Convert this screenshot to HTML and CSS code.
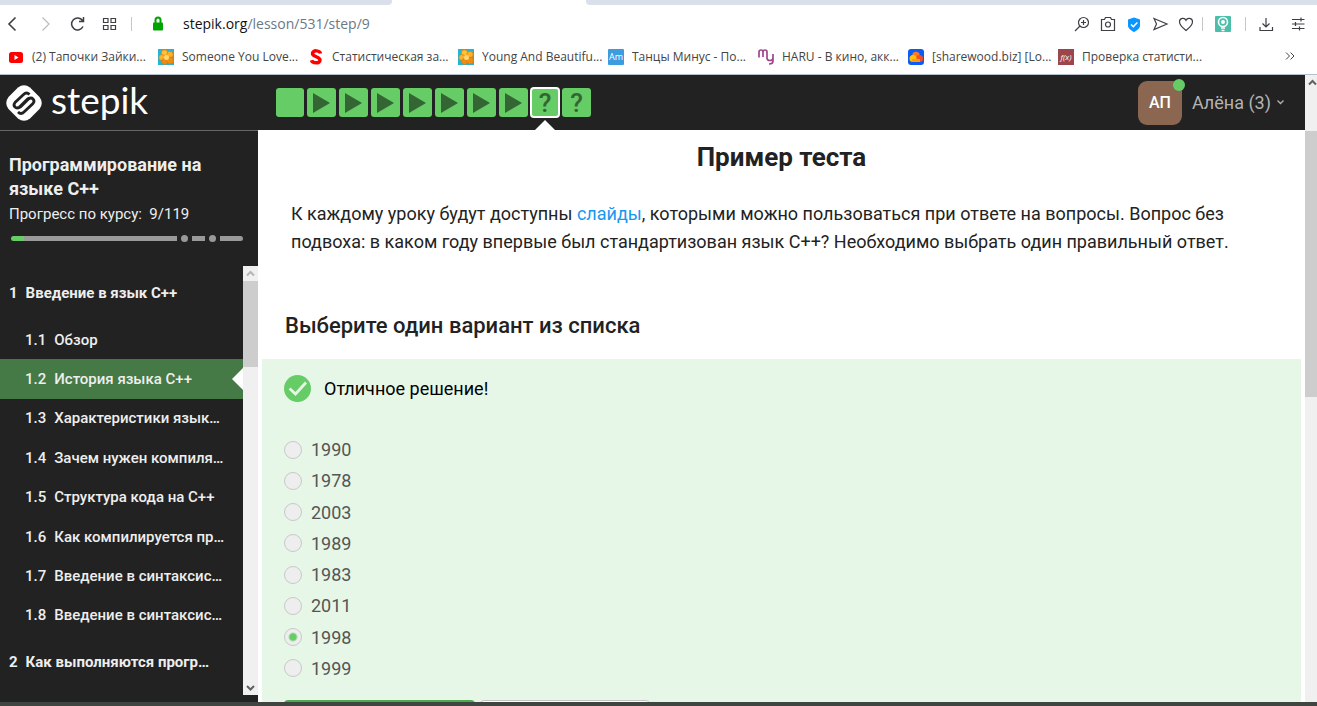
FILE: index.html
```html
<!DOCTYPE html>
<html lang="ru">
<head>
<meta charset="utf-8">
<title>Пример теста</title>
<link rel="stylesheet" href="styles.css">
</head>
<body>
<div class="tabstrip"><div class="tab-left"></div><div class="tab-right"></div></div>
<div class="toolbar">
  <button class="tool back" aria-label="Назад"><svg width="20" height="20" viewBox="0 0 20 20"><path d="M12.5 3.5 6 10l6.5 6.5"/></svg></button>
  <button class="tool forward" aria-label="Вперёд"><svg width="20" height="20" viewBox="0 0 20 20"><path d="M7.500 3.500 14 10l-6.500 6.500"/></svg></button>
  <button class="tool reload" aria-label="Обновить"><svg width="20" height="20" viewBox="0 0 20 20"><path d="M16 12.500A6 6 0 1 1 15.500 6.500M16.500 3v4.500H12"/></svg></button>
  <button class="tool grid" aria-label="Экспресс-панель"><svg width="20" height="20" viewBox="0 0 20 20"><path d="M4.500 4.500h4.500v4H4.500zM12 4.500h4.500v4H12zM4.500 11.500h4.500v4H4.500zM12 11.500h4.500v4H12z"/></svg></button>
  <span class="divider"></span>
  <svg class="lock" width="20" height="20" viewBox="0 0 20 20"><rect x="5" y="8.500" width="10" height="8" rx="1" fill="#00a400"/><path d="M7.500 9V6a2.500 2.500 0 0 1 5 0V9" fill="none" stroke="#00a400" stroke-width="2"/></svg>
  <div class="address"><span class="host">stepik.org</span>/lesson/531/step/9</div>
  <div class="tools-right">
    <button class="tool" aria-label="Масштаб"><svg width="20" height="20" viewBox="0 0 20 20"><circle cx="11.500" cy="8.500" r="5"/><path d="m8 12-5 5M11.500 6v5M9 8.500h5"/></svg></button>
    <button class="tool" aria-label="Снимок"><svg width="20" height="20" viewBox="0 0 20 20"><path d="M3.500 5.500h3l1-2h5l1 2h3v11h-13z"/><circle cx="10" cy="10.500" r="2.500"/></svg></button>
    <button class="tool" aria-label="Защита"><svg width="20" height="20" viewBox="0 0 20 20"><path class="shield" d="M10 3.500 16 5.500v6c0 3-3 5-6 6.500C7 16.500 4 14.500 4 11.500v-6z"/><path class="white" d="m7 10.500 2.300 2.200 4-4.200"/></svg></button>
    <button class="tool" aria-label="Отправить"><svg width="20" height="20" viewBox="0 0 20 20"><path d="M4 4.500 17 10 4 15.500 6.500 10z"/></svg></button>
    <button class="tool" aria-label="Закладка"><svg width="20" height="20" viewBox="0 0 20 20"><path d="M10 16.500C7 14 3.500 11.500 3.500 7.800 3.500 4 8.500 3 10 6.300 11.500 3 16.500 4 16.500 7.800c0 3.700-3.500 6.200-6.500 8.700z"/></svg></button>
    <span class="divider"></span>
    <button class="tool" aria-label="Расширение"><svg width="20" height="20" viewBox="0 0 20 20"><rect class="mint" x="2" y="2" width="16" height="16" rx="1"/><circle class="bulb" cx="10" cy="8" r="4.500"/><circle class="whitefill" cx="10" cy="8" r="2"/><path class="white" d="M8 14h4M8.500 16.500h3"/></svg></button>
    <span class="divider"></span>
    <button class="tool" aria-label="Загрузки"><svg width="20" height="20" viewBox="0 0 20 20"><path d="M10 4v8.500M6.500 9.500 10 13l3.500-3.500M4 13v3.500h12.500V13"/></svg></button>
    <button class="tool settings" aria-label="Настройки"><svg width="20" height="20" viewBox="0 0 20 20"><path d="M4 5.500h12.500M4 10h12.500M4 14.500h12.500M13 3.500v4M7.500 8v4M11.500 12.500v4"/></svg></button>
  </div>
</div>
<nav class="bookmarks">
  <a class="bookmark" href="#"><svg width="16" height="16" viewBox="0 0 16 16"><rect x="1" y="3" width="14" height="11" rx="2.500" fill="#f00"/><path d="m6.500 6 4 2.500-4 2.500z" fill="#fff"/></svg>(2) Тапочки Зайки...</a>
  <a class="bookmark" href="#"><svg width="16" height="16" viewBox="0 0 16 16"><rect width="16" height="16" fill="#22b5d5"/><g stroke="#d9780c" stroke-width=".6"><circle cx="6.500" cy="4" r="3.200" fill="#ffc233"/><circle cx="12" cy="5.500" r="3.200" fill="#fbb12a"/><circle cx="3.800" cy="8.500" r="3" fill="#fbb12a"/><circle cx="6.500" cy="12.500" r="3" fill="#f08c10"/><circle cx="12" cy="11.500" r="3.500" fill="#f08c10"/></g><circle cx="8.500" cy="8.500" r="2.500" fill="#ffd772"/></svg>Someone You Love...</a>
  <a class="bookmark" href="#"><svg width="16" height="16" viewBox="0 0 16 16"><path d="M12.500 4.500C12 1.500 4.500.500 4.500 4.500c0 3.500 7.500 3 7.500 6.500 0 4-7.500 3.500-8.500.200" fill="none" stroke="#f00" stroke-width="3.500"/></svg>Статистическая за...</a>
  <a class="bookmark" href="#"><svg width="16" height="16" viewBox="0 0 16 16"><rect width="16" height="16" fill="#22b5d5"/><g stroke="#d9780c" stroke-width=".6"><circle cx="6.500" cy="4" r="3.200" fill="#ffc233"/><circle cx="12" cy="5.500" r="3.200" fill="#fbb12a"/><circle cx="3.800" cy="8.500" r="3" fill="#fbb12a"/><circle cx="6.500" cy="12.500" r="3" fill="#f08c10"/><circle cx="12" cy="11.500" r="3.500" fill="#f08c10"/></g><circle cx="8.500" cy="8.500" r="2.500" fill="#ffd772"/></svg>Young And Beautifu...</a>
  <a class="bookmark" href="#"><span class="fav fav-am">Am</span>Танцы Минус - По...</a>
  <a class="bookmark" href="#"><svg width="16" height="16" viewBox="0 0 16 16"><path d="M1 8.500V3q0-2 2-2t2 2v5V3q0-2 2-2t2 2v4M9 5v4q0 2.500 3 2.500t3-2.500V5v7q0 3-4 3" fill="none" stroke="#a1468c" stroke-width="1.700"/></svg>HARU - В кино, акк...</a>
  <a class="bookmark" href="#"><svg width="16" height="16" viewBox="0 0 16 16"><rect width="16" height="16" rx="3" fill="#0a5cf5"/><circle cx="8" cy="6.500" r="3.700" fill="#ff7a1a"/><circle cx="11.500" cy="9.500" r="3.500" fill="#f4511e"/><circle cx="5" cy="9.500" r="3.500" fill="#ffc107"/><path d="M4 10h8v3H4z" fill="#ff9a14"/></svg>[sharewood.biz] [Lo...</a>
  <a class="bookmark" href="#"><span class="fav fav-fx">f(x)</span>Проверка статисти...</a>
  <button class="more" aria-label="Ещё"><svg width="10" height="10" viewBox="0 0 10 10"><path d="m1 1.500 3.500 3.500L1 8.500M5.500 1.500 9 5 5.500 8.500"/></svg></button>
</nav>
<div class="viewport">
  <div class="app">
    <header class="header">
      <a class="logo" href="#"><svg width="36" height="36" viewBox="0 0 36 36"><path d="M12 2.500Q18-2 24 2.500L33.500 12Q38 18 33.500 24L24 33.500Q18 38 12 33.500L2.500 24Q-2 18 2.500 12Z" fill="#fff"/><path d="M23.500 9.500q-3-3-6 0L9 17.500q-2 2.500 0 4.500t4.500 0l8-8q2-1.500 3.500 0M12 27q3 3 6 0l9-8.500q2-2.500 0-4.500t-4.500 0l-8 8q-2 1.500-3.500 0" fill="none" stroke="#222" stroke-width="2.800"/></svg><span>stepik</span></a>
      <div class="steps">
        <a class="step text" href="#" aria-label="1"></a>
        <a class="step" href="#" aria-label="2"><svg width="17" height="20" viewBox="0 0 17 20"><path d="M0 0 17 10 0 20z"/></svg></a>
        <a class="step" href="#" aria-label="3"><svg width="17" height="20" viewBox="0 0 17 20"><path d="M0 0 17 10 0 20z"/></svg></a>
        <a class="step" href="#" aria-label="4"><svg width="17" height="20" viewBox="0 0 17 20"><path d="M0 0 17 10 0 20z"/></svg></a>
        <a class="step" href="#" aria-label="5"><svg width="17" height="20" viewBox="0 0 17 20"><path d="M0 0 17 10 0 20z"/></svg></a>
        <a class="step" href="#" aria-label="6"><svg width="17" height="20" viewBox="0 0 17 20"><path d="M0 0 17 10 0 20z"/></svg></a>
        <a class="step" href="#" aria-label="7"><svg width="17" height="20" viewBox="0 0 17 20"><path d="M0 0 17 10 0 20z"/></svg></a>
        <a class="step" href="#" aria-label="8"><svg width="17" height="20" viewBox="0 0 17 20"><path d="M0 0 17 10 0 20z"/></svg></a>
        <a class="step current" href="#">?</a>
        <a class="step" href="#">?</a>
      </div>
      <button class="user"><span class="avatar">АП</span>Алёна (3)<svg width="7" height="5" viewBox="0 0 7 5"><path d="m.500.500 3 3 3-3"/></svg></button>
    </header>
    <div class="main">
      <aside class="sidebar">
        <div class="course">
          <h2>Программирование на языке C++</h2>
          <p>Прогресс по курсу: &nbsp;9/119</p>
          <div class="progress"><i class="bar long"></i><i class="dot"></i><i class="bar mid"></i><i class="dot"></i><i class="bar end"></i></div>
        </div>
        <div class="toc">
          <div class="toc-list">
            <a class="section" href="#"><b>1</b><span>Введение в язык C++</span></a>
            <div class="lessons">
              <a href="#"><b>1.1</b><span>Обзор</span></a>
              <a class="active" href="#"><b>1.2</b><span>История языка C++</span></a>
              <a href="#"><b>1.3</b><span>Характеристики язык…</span></a>
              <a href="#"><b>1.4</b><span>Зачем нужен компиля…</span></a>
              <a href="#"><b>1.5</b><span>Структура кода на C++</span></a>
              <a href="#"><b>1.6</b><span>Как компилируется пр…</span></a>
              <a href="#"><b>1.7</b><span>Введение в синтаксис…</span></a>
              <a href="#"><b>1.8</b><span>Введение в синтаксис…</span></a>
            </div>
            <a class="section" href="#"><b>2</b><span>Как выполняются прогр…</span></a>
          </div>
          <div class="scroll"><svg class="faint" width="15" height="15" viewBox="0 0 15 15"><path d="m4 9.500 3.500-3.500L11 9.500"/></svg><div class="thumb"></div><svg class="down" width="15" height="15" viewBox="0 0 15 15"><path d="m4 6 3.500 3.500L11 6"/></svg></div>
        </div>
      </aside>
      <main class="content">
        <h1>Пример теста</h1>
        <p class="task">К каждому уроку будут доступны <a href="#">слайды</a>, которыми можно пользоваться при ответе на вопросы. Вопрос без подвоха: в каком году впервые был стандартизован язык C++? Необходимо выбрать один правильный ответ.</p>
        <h3>Выберите один вариант из списка</h3>
        <form class="quiz">
          <div class="feedback"><svg width="27" height="27" viewBox="0 0 27 27"><circle cx="13.500" cy="13.500" r="13.500" fill="#66cc66"/><path d="m5.500 13.500 6 5.500L22 7.500" fill="none" stroke="#e6f7e8" stroke-width="2.800"/></svg>Отличное решение!</div>
          <div class="options">
            <label><input type="radio" name="year">1990</label>
            <label><input type="radio" name="year">1978</label>
            <label><input type="radio" name="year">2003</label>
            <label><input type="radio" name="year">1989</label>
            <label><input type="radio" name="year">1983</label>
            <label><input type="radio" name="year">2011</label>
            <label><input type="radio" name="year" checked>1998</label>
            <label><input type="radio" name="year">1999</label>
          </div>
          <div class="actions"><button type="button" class="next" aria-label="Следующий шаг"></button><button type="button" class="retry" aria-label="Решить снова"></button></div>
        </form>
      </main>
    </div>
  </div>
  <div class="scroll page-scroll"><svg width="15" height="15" viewBox="0 0 15 15"><path d="m4 9.500 3.500-3.500L11 9.500"/></svg><div class="thumb"></div></div>
</div>
<div class="taskbar"></div>
</body>
</html>
```
FILE: styles.css
```css
* { box-sizing: border-box; }
body {
  margin: 0;
  height: 100vh;
  overflow: hidden;
  display: flex;
  flex-direction: column;
  background: #fff;
  font-family: Roboto, "Noto Sans", sans-serif;
  color: #222;
}
a { color: inherit; text-decoration: none; }
button { border: 0; padding: 0; background: none; font: inherit; color: inherit; }
h1, h2, h3, p { margin: 0; }

/* browser window */
.tabstrip { flex: none; display: flex; height: 5px; gap: 194px; }
.tab-left { width: 392px; background: #d9e0e9; border-radius: 0 0 4px 0; }
.tab-right { flex: 1; background: #d9e0e9; border-radius: 0 0 0 4px; }
.toolbar { flex: none; display: flex; align-items: center; height: 38px; padding: 0 9px 0 3px; }
.tool { width: 20px; height: 20px; margin-right: 6px; }
.tool svg, .lock { display: block; }
.tool path, .tool circle { fill: none; stroke: #3c4043; stroke-width: 1.2; }
.tool .shield { fill: #0a95ff; stroke: none; }
.tool .white { stroke: #fff; stroke-width: 1.6; }
.tool .mint { fill: #4bbfa9; }
.tool .bulb { stroke: #fff; stroke-width: 1.6; }
.tool .whitefill { fill: #fff; stroke: none; }
.back, .forward, .reload { margin-right: 12px; }
.back path { stroke-width: 1.6; }
.tool.forward path { stroke: #bbb; }
.reload path { stroke-width: 1.5; }
.grid { margin-right: 12px; }
.divider { width: 1px; height: 14px; margin-right: 16px; background: #c4c6ca; }
.lock { margin-right: 15px; }
.address { flex: 1; font: 14px/20px "Open Sans", "Noto Sans", sans-serif; color: #6b7885; }
.host { color: #111; }
.tools-right { display: flex; align-items: center; }
.tools-right .divider { margin: 0 10px 0 0; }
.tools-right .divider + .tool { margin-right: 12px; }
.tools-right .settings { margin-right: 0; }

.bookmarks {
  flex: none;
  display: flex;
  align-items: center;
  height: 32px;
  padding: 0 22px 4px 8px;
  border-bottom: 1px solid #b3bfca;
  font: 12px/16px "Open Sans", "Noto Sans", sans-serif;
  color: #444;
}
.bookmark { flex: none; display: flex; align-items: center; gap: 8px; width: 150px; white-space: nowrap; }
.bookmark svg, .fav { flex: none; }
.fav { width: 16px; height: 16px; color: #fff; text-align: center; font-size: 9px; }
.fav-am { border-radius: 1px; background: #3d9be0; }
.fav-fx { background: #9c464b; font-style: italic; font-size: 8px; }
.more { margin-left: auto; line-height: 10px; }
.more path { fill: none; stroke: #444; }

/* page */
.viewport { flex: 1; min-height: 0; display: flex; }
.app { flex: 1; min-width: 0; display: flex; flex-direction: column; }
.header { flex: none; display: flex; align-items: center; height: 55px; background: #222; }
.logo { display: flex; align-items: center; width: 276px; padding-left: 6px; gap: 9px; color: #fff; }
.logo span { font: 37px/40px Lato, sans-serif; padding-bottom: 5px; }
.steps { flex: 1; display: flex; gap: 3px; }
.step {
  position: relative;
  display: flex;
  align-items: center;
  justify-content: center;
  width: 29px;
  height: 29px;
  border-radius: 3px;
  background: #66cc66;
  color: #336633;
  font-size: 26px;
  font-weight: 500;
}
.step.text, .step.current { width: 28px; }
.step path { fill: #336633; }
.step.current { border: 1px solid #fff; box-shadow: 0 0 0 1px #fff; }
.step.current::after {
  content: "";
  position: absolute;
  top: 31px;
  left: 3px;
  border: 10px solid transparent;
  border-top: 0;
  border-bottom-color: #fff;
}
.user { display: flex; align-items: center; margin-right: 21px; font-size: 18px; color: #b3b3b3; }
.user svg { margin-left: 6px; }
.user path { fill: none; stroke: #b3b3b3; stroke-width: 1.3; }
.avatar {
  position: relative;
  width: 44px;
  margin-right: 10px;
  border-radius: 9px;
  background: #8b6650;
  color: #fff;
  font-size: 16px;
  font-weight: 500;
  line-height: 44px;
}
.avatar::after {
  content: "";
  position: absolute;
  top: -2px;
  right: -3px;
  width: 12px;
  height: 12px;
  border-radius: 50%;
  background: #66cc66;
}
.main { flex: 1; min-height: 0; display: flex; }
.sidebar {
  flex: none;
  display: flex;
  flex-direction: column;
  width: 258px;
  padding-bottom: 7px;
  border-top: 1px solid #666;
  background: #222;
  color: #eee;
}
.course { padding: 22px 10px 24px 9px; }
.course h2 { font-size: 18px; line-height: 24px; font-weight: 700; }
.course p { font-size: 15px; line-height: 26px; }
.progress { display: flex; align-items: center; gap: 4px; height: 7px; margin: 8px 5px 0 2px; }
.bar { height: 5px; background: #999; }
.bar.long { flex: 1; border-radius: 3px 0 0 3px; background: linear-gradient(to right, #66cc66 13px, #999 13px); }
.bar.mid { width: 13px; }
.bar.end { width: 23px; border-radius: 0 3px 3px 0; }
.dot { width: 7px; height: 7px; border-radius: 50%; background: #999; }
.toc { flex: 1; min-height: 0; display: flex; overflow: hidden; }
.toc-list { flex: 1; min-width: 0; font-size: 15px; line-height: 20px; font-weight: 500; white-space: nowrap; }
.toc a { display: flex; align-items: center; gap: 8px; }
.toc b { font-weight: inherit; }
.toc .section { height: 54px; padding-left: 9px; font-weight: 700; }
.lessons { display: grid; grid-template-rows: repeat(8, 1fr); height: 315px; }
.lessons a { position: relative; padding-left: 25px; }
.lessons .active { background: #457945; }
.lessons .active::after {
  content: "";
  position: absolute;
  top: 9px;
  right: 0;
  border: 11px solid transparent;
  border-left: 0;
  border-right-color: #fff;
}
.scroll { flex: none; width: 15px; display: flex; flex-direction: column; background: #f0f0f0; }
.scroll svg { flex: none; }
.scroll path { fill: none; stroke: #606060; stroke-width: 2; }
.scroll .faint path { stroke: #b5b5b5; }
.scroll .thumb { height: 20%; background: #cdcdcd; }
.scroll .down { margin-top: auto; }
.page-scroll { width: 12px; overflow: hidden; }
.page-scroll svg { margin-bottom: 41px; }
.page-scroll .thumb { height: 266px; }

.content { flex: 1; min-width: 0; display: flex; flex-direction: column; padding: 0 4px; overflow: hidden; }
h1 { padding-top: 11px; font-size: 26px; line-height: 32px; font-weight: 700; text-align: center; }
.task { padding: 27px 60px 0 29px; font-size: 18px; line-height: 28px; }
.task a { color: #1498f0; }
h3 { padding: 56px 23px 19px; font-size: 22px; line-height: 28px; font-weight: 500; }
.quiz { flex: 1; padding: 16px 22px 0; background: #e6f7e8; }
.feedback { display: flex; align-items: center; gap: 13px; font-size: 18px; color: #000; }
.options { display: grid; grid-template-rows: repeat(8, 1fr); height: 250px; margin-top: 32px; }
.options label { display: flex; align-items: center; gap: 9px; justify-self: start; font-size: 18px; color: #555; }
.options input {
  appearance: none;
  width: 18px;
  height: 18px;
  margin: 0;
  border: 1px solid #c8c8c8;
  border-radius: 50%;
  background: #eee;
}
.options input:checked { background: radial-gradient(circle, #66cc66 3px, #eee 5px); }
.actions { display: flex; gap: 5px; margin-top: 16px; }
.actions button { height: 40px; border-radius: 4px; }
.next { width: 191px; background: #4fa94f; }
.retry { width: 170px; border: 1px solid #c4c4c4; background: #fff; }
.taskbar { flex: none; height: 4px; background: #414542; }
```
